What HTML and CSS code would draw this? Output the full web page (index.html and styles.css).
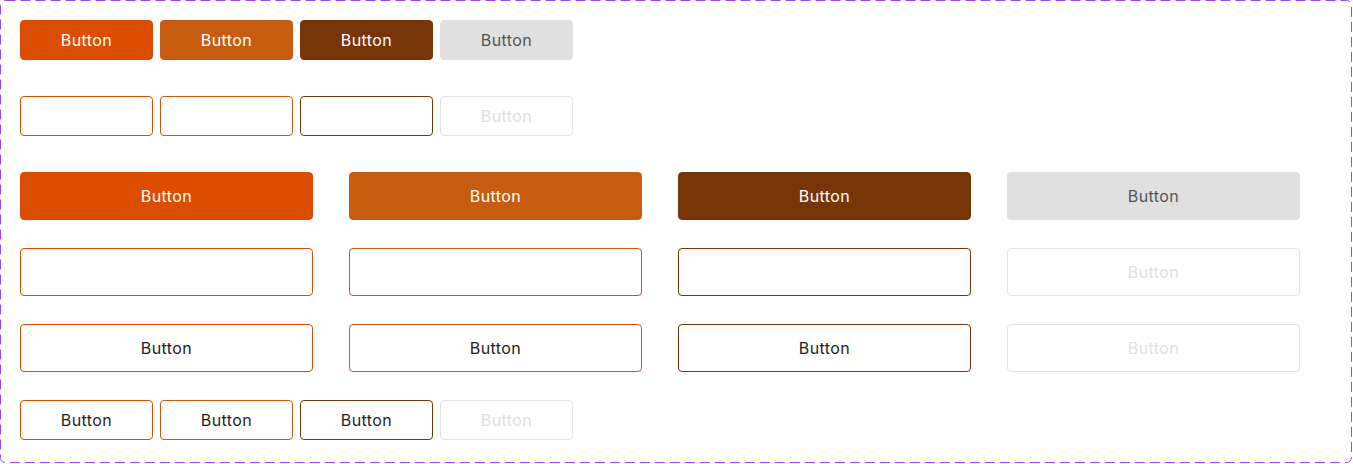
FILE: index.html
```html
<!DOCTYPE html>
<html>
<head>
<meta charset="utf-8">
<link rel="stylesheet" href="styles.css">
</head>
<body>
<div class="frame">
  <svg class="frame-border" width="1353" height="464" viewBox="0 0 1353 464" aria-hidden="true">
    <rect x="0.5" y="0.5" width="1351" height="462" rx="5" ry="5" fill="none" stroke="#9747FF" stroke-width="1" stroke-dasharray="10 5"/>
  </svg>

  <div class="row row-sm gap-lg">
    <button class="btn sm solid c1">Button</button>
    <button class="btn sm solid c2">Button</button>
    <button class="btn sm solid c3">Button</button>
    <button class="btn sm solid dis">Button</button>
  </div>

  <div class="row row-sm gap-lg">
    <button class="btn sm outline c1"></button>
    <button class="btn sm outline c2"></button>
    <button class="btn sm outline c3"></button>
    <button class="btn sm outline dis">Button</button>
  </div>

  <div class="row grid-lg gap-md">
    <button class="btn lg solid c1">Button</button>
    <button class="btn lg solid c2">Button</button>
    <button class="btn lg solid c3">Button</button>
    <button class="btn lg solid dis">Button</button>
  </div>

  <div class="row grid-lg gap-md">
    <button class="btn lg outline c1"></button>
    <button class="btn lg outline c2"></button>
    <button class="btn lg outline c3"></button>
    <button class="btn lg outline dis">Button</button>
  </div>

  <div class="row grid-lg gap-md">
    <button class="btn lg outline c1">Button</button>
    <button class="btn lg outline c2">Button</button>
    <button class="btn lg outline c3">Button</button>
    <button class="btn lg outline dis">Button</button>
  </div>

  <div class="row row-sm">
    <button class="btn sm outline c1 dark">Button</button>
    <button class="btn sm outline c2 dark">Button</button>
    <button class="btn sm outline c3 dark">Button</button>
    <button class="btn sm outline dis">Button</button>
  </div>
</div>
</body>
</html>
```

FILE: styles.css
```css
* { box-sizing: border-box; }

html, body {
  margin: 0;
  padding: 0;
  background: #ffffff;
}

body {
  width: 1353px;
  height: 464px;
  overflow: hidden;
  font-family: "Inter", "Noto Sans", sans-serif;
}

.frame {
  position: relative;
  width: 1353px;
  height: 464px;
  padding: 20px 20px 0 20px;
}

.frame-border {
  position: absolute;
  left: 0;
  top: 0;
  pointer-events: none;
}

.row { display: flex; }

.row-sm {
  gap: 7px;
}

.grid-lg {
  display: grid;
  grid-template-columns: repeat(4, 293px);
  column-gap: 36px;
}

.gap-lg { margin-bottom: 36px; }
.gap-md { margin-bottom: 28px; }

.btn {
  display: flex;
  align-items: center;
  justify-content: center;
  margin: 0;
  padding: 0;
  border: 1px solid transparent;
  border-radius: 4px;
  background: #ffffff;
  font-family: inherit;
  font-size: 16px;
  font-weight: 400;
  letter-spacing: 0.4px;
  line-height: 1;
  color: #ffffff;
  cursor: pointer;
}

.btn.sm { width: 133px; height: 40px; }
.btn.lg { width: 293px; height: 48px; }

.solid.c1 { background: #DD4D00; border-color: #DD4D00; }
.solid.c2 { background: #C75C11; border-color: #C75C11; }
.solid.c3 { background: #783608; border-color: #783608; }
.solid.dis { background: #E0E0E0; border-color: #E0E0E0; color: #555555; }

.outline { color: #222222; }
.outline.c1 { border-color: #DD4D00; }
.outline.c2 { border-color: #C75C11; }
.outline.c3 { border-color: #783608; }
.outline.dis { border-color: #E4E4E4; color: #E0E0E0; }

.dark { color: #1f1f1f; font-weight: 400; }
```
